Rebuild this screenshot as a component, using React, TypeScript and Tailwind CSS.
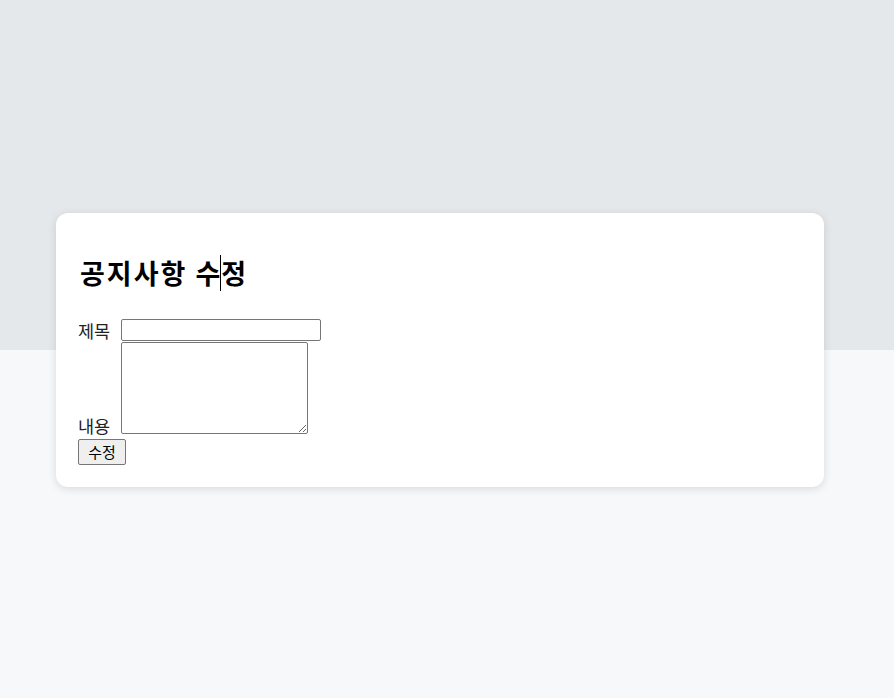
import React from "react";

export default function App() {
  const ko = { fontFamily: '"Noto Sans CJK KR", "Noto Sans", sans-serif' };
  return (
    <div className="min-h-[698px] bg-[#f7f8fa] relative" style={ko}>
      <div className="h-[350px] bg-[#e5e8eb]" />
      <div className="-mt-[137px] ml-[56px] w-[768px] bg-white rounded-[12px] shadow-[0_2px_8px_rgba(0,0,0,0.12)] pl-[22px] pr-6 pt-[40px] pb-[22px] relative">
        <h2 className="pl-[2px] text-[27px] font-bold leading-[40px] text-black flex items-center tracking-[2px]">
          <span>공지사항 수</span>
          <span className="inline-block w-[1px] h-[36px] bg-black -ml-[2px]" />
          <span>정</span>
        </h2>
        <div className="mt-[26px] flex items-end gap-[8px]">
          <span className="text-[17.5px] leading-[22px] text-[#222] w-[35px] -mb-[1px]">제목</span>
          <input className="w-[200px] h-[22px] border border-[#767676] rounded-[2px] bg-white" />
        </div>
        <div className="mt-[1px] flex items-end gap-[8px]">
          <span className="text-[17.5px] leading-[22px] text-[#222] w-[35px] -mb-[3px]">내용</span>
          <textarea className="w-[187px] h-[92px] border border-[#767676] rounded-[2px] bg-white block" />
        </div>
        <button className="mt-[5px] block h-[26px] w-[48px] border border-[#767676] rounded-[2px] bg-[#efefef] text-[15px] leading-[22px] text-black">
          수정
        </button>
      </div>
    </div>
  );
}
